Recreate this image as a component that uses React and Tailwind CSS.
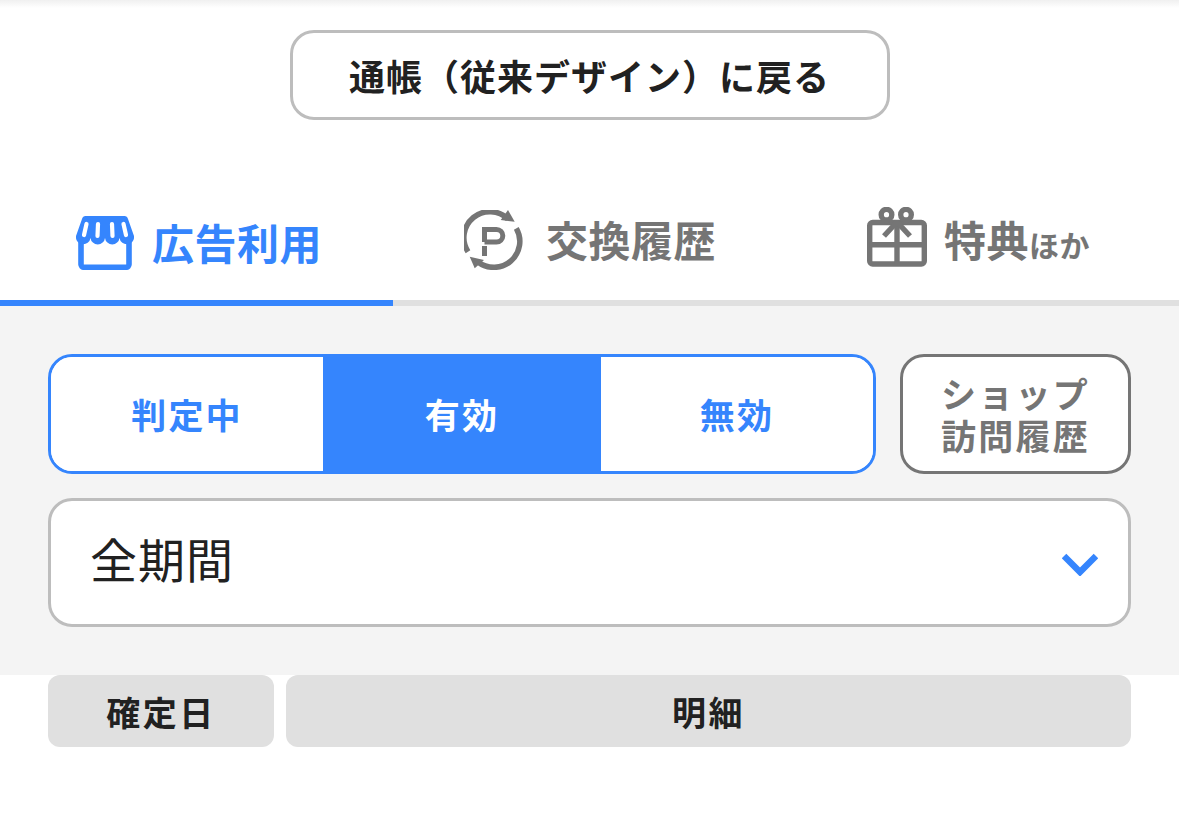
const JP = "font-['Noto_Sans_CJK_JP','Noto_Sans',sans-serif]"

const ShopIcon = () => (
  <svg width="58" height="54" viewBox="0 0 58 54" fill="none" stroke="#3585fd" strokeWidth="5.6">
    <path d="M5 22V48a3 3 0 0 0 3 3.3H50a3 3 0 0 0 3-3.3V22" fill="#fff" />
    <path
      d="M10 0H48a4 4 0 0 1 4 3L58 20a7.2 7.2 0 0 1-14.5 2a7.3 7.3 0 0 1-14.5 0a7.3 7.3 0 0 1-14.5 0A7.2 7.2 0 0 1 0 20L6 3a4 4 0 0 1 4-3Z"
      fill="#3585fd"
      stroke="none"
    />
    <path d="M10.5 8L8 19M22 8L21.5 20M36 8L36.5 20M47.5 8L50 19" stroke="#fff" strokeWidth="4.2" strokeLinecap="round" />
  </svg>
)

const PointIcon = () => (
  <svg width="60" height="60" viewBox="0 0 60 60" fill="none" stroke="#757575" strokeWidth="5.5">
    <path d="M4 41.7A26 26 0 0 1 44 9" />
    <path d="M52.3 18.3A26 26 0 0 1 14 52" />
    <path d="M44 0L50.7 11.7L36.7 10Z" fill="#757575" stroke="none" />
    <path d="M5.7 46.7L10.7 58.3L20 50Z" fill="#757575" stroke="none" />
    <path d="M20.5 32V19.5H32.5a6.3 6.3 0 0 1 0 12.6H20.5M20.5 36V46" strokeWidth="5" />
  </svg>
)

const GiftIcon = () => (
  <svg width="60" height="60" viewBox="0 0 60 60" fill="none" stroke="#757575" strokeWidth="5.4" className="mb-[6px]">
    <rect x="2.7" y="15.5" width="54.6" height="41.5" rx="3" />
    <path d="M2.7 37.7H57.3M30 16V57" />
    <circle cx="19.5" cy="7.7" r="5.3" />
    <circle cx="39" cy="7.7" r="5.3" />
    <path d="M30 15L17 29M30 15L43 29" />
  </svg>
)

const Tab = ({ icon, active, className, children }) => (
  <div
    className={`flex h-[120px] w-[393px] items-center justify-center border-b-[6px] ${className} ${
      active ? 'border-[#3585fd] text-[#3585fd]' : 'border-[#e0e0e0] text-[#757575]'
    }`}
  >
    {icon}
    <span className="mb-[4px] text-[42px] font-bold tracking-[0.5px]">{children}</span>
  </div>
)

const Seg = ({ active, children }) => (
  <div
    className={`flex items-center justify-center text-[35px] font-bold tracking-[2.2px] ${
      active ? 'w-[278px] bg-[#3585fd] text-white' : 'flex-1 bg-white text-[#3585fd]'
    }`}
  >
    {children}
  </div>
)

export default function App() {
  return (
    <div className={`${JP} h-[828px] w-[1179px] overflow-hidden bg-white text-[#212121]`}>
      <div className="h-[8px] bg-gradient-to-b from-[#f0f0f0] to-white" />
      <div className="flex justify-center pt-[22px]">
        <div className="flex h-[90px] w-[600px] items-center justify-center rounded-[24px] border-[3px] border-[#bdbdbd] text-[36px] font-bold tracking-[1px]">
          通帳（従来デザイン）に戻る
        </div>
      </div>

      <div className="mt-[66px] flex">
        <Tab className="gap-[18px] pl-[5px]" active icon={<ShopIcon />}>広告利用</Tab>
        <Tab className="gap-[22px] pb-[6px] pl-[1px]" icon={<PointIcon />}>交換履歴</Tab>
        <Tab className="gap-[17px] pb-[6px] pr-[8px]" icon={<GiftIcon />}>
          特典<span className="text-[30px]">ほか</span>
        </Tab>
      </div>

      <div className="flex h-[369px] flex-col gap-[24px] bg-[#f4f4f4] px-[48px] pt-[48px]">
        <div className="flex gap-[24px]">
          <div className="flex h-[120px] w-[828px] overflow-hidden rounded-[24px] border-[3px] border-[#3585fd]">
            <Seg>判定中</Seg>
            <Seg active>有効</Seg>
            <Seg>無効</Seg>
          </div>
          <div className="flex h-[120px] flex-1 items-center justify-center rounded-[24px] border-[3px] border-[#757575] bg-white text-center text-[35px] font-bold leading-[42px] tracking-[2.2px] text-[#757575]">
            <span className="block">
              ショップ<br />訪問履歴
            </span>
          </div>
        </div>
        <div className="flex h-[129px] items-center justify-between rounded-[24px] border-[3px] border-[#bdbdbd] bg-white pl-[39px] pr-[30px]">
          <span className="mb-[8px] text-[47px] tracking-[1px]">全期間</span>
          <svg width="36" height="24" viewBox="0 0 36 24" fill="none" stroke="#3585fd" strokeWidth="6.5" className="mt-[2px]">
            <path d="M2 4L18 20L34 4" />
          </svg>
        </div>
      </div>

      <div className="flex gap-[12px] px-[48px] text-[34px] font-bold tracking-[2.5px]">
        <div className="flex h-[72px] w-[226px] items-center justify-center rounded-[12px] bg-[#e0e0e0]">確定日</div>
        <div className="flex h-[72px] flex-1 items-center justify-center rounded-[12px] bg-[#e0e0e0]">明細</div>
      </div>
    </div>
  )
}
